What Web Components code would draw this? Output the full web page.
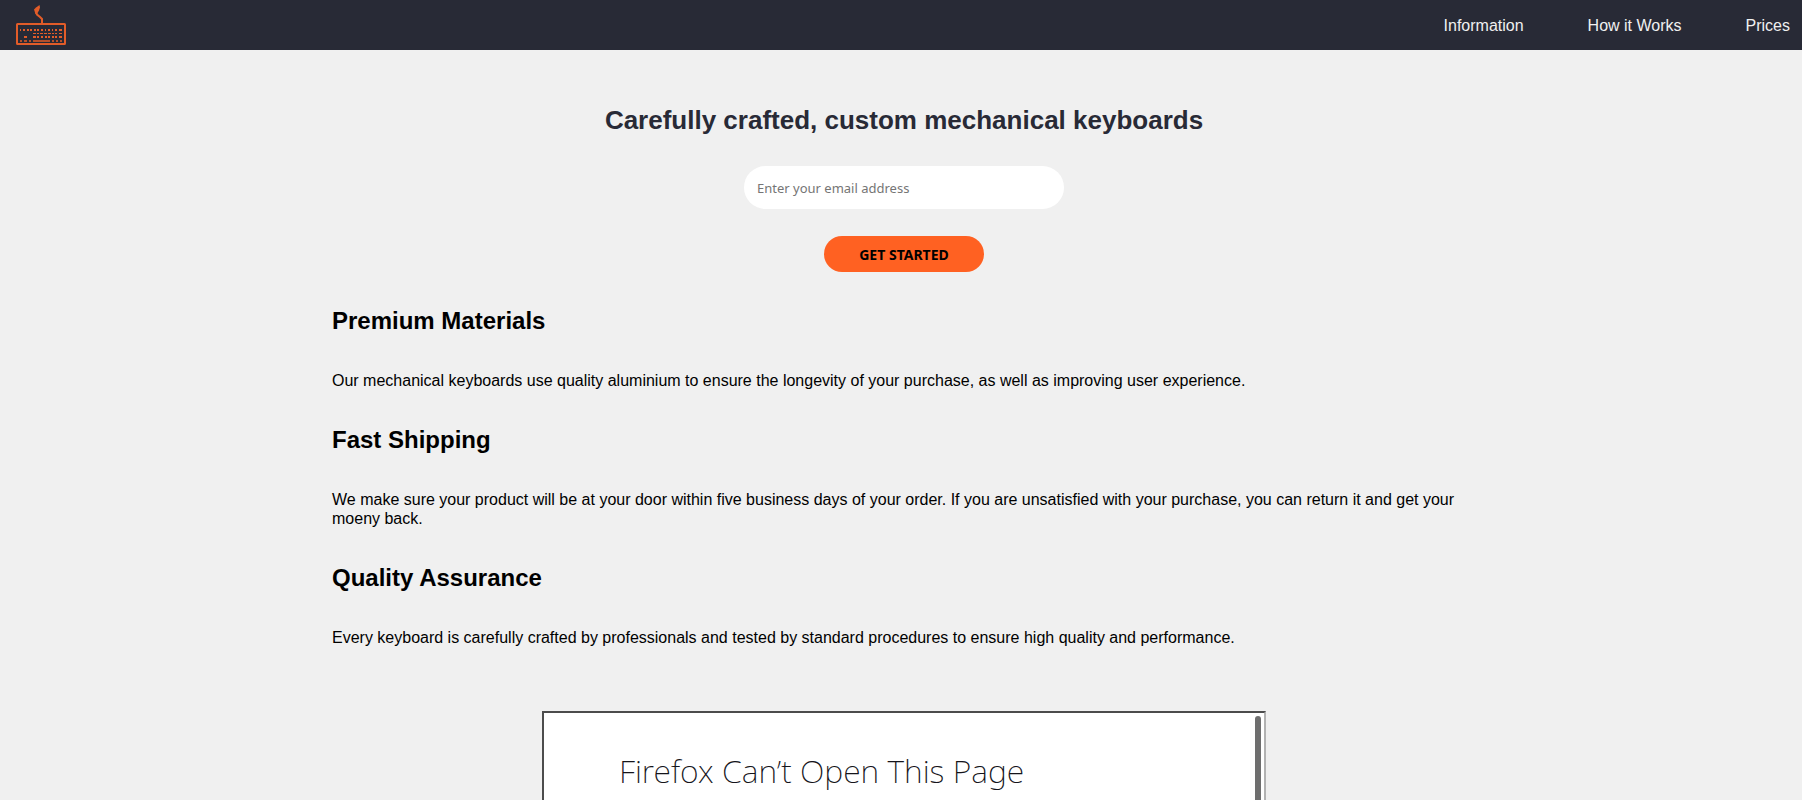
<!DOCTYPE html>
<html lang="en">
<head>
<meta charset="utf-8">
<title>Custom mechanical keyboards</title>
<style>
  html { scrollbar-width: none; }
  body { margin: 0; background: #f0f0f0; color: #000; font: 16px/19px "Liberation Sans", Arial, sans-serif; }
</style>
</head>
<body>
<keyboard-page></keyboard-page>
<script>
const define = (name, html) => {
  const template = document.createElement('template');
  template.innerHTML = html;
  customElements.define(name, class extends HTMLElement {
    constructor() {
      super();
      this.attachShadow({ mode: 'open' }).append(template.content.cloneNode(true));
    }
  });
};

define('keyboard-logo', `
  <style>
    :host { display: block; }
    svg { display: block; width: 52px; height: 42px; }
  </style>
  <svg viewBox="15 4 52 42" fill="none" stroke="#e25c29" role="img" aria-label="Keyboard logo">
    <rect x="17" y="24" width="48" height="20" rx="0.5" stroke-width="2"/>
    <path d="M42 23V19L40 17L37 14.500L36 12.500V9.500" stroke-width="2"/>
    <path d="M39.500 5L36 7.500L34 9.500L35.500 14H37L39 10.500L40 7.500Z" fill="#e25c29" stroke="none"/>
    <path stroke-width="2" d="M20 30h1M23 30h2M27 30h2M30 30h2M34 30h2M37 30h2M41 30h2M45 30h1M48 30h2M52 30h1M55 30h2M59 30h3"/>
    <path stroke-width="1.200" d="M33 33.500h3M37 33.500h2M40 33.500h3M44 33.500h3M48 33.500h3M52 33.500h2M55 33.500h2M59 33.500h3"/>
    <path stroke-width="2" d="M24 37h3M33 37h3M37 37h2M41 37h2M45 37h2M48 37h2M52 37h2M55 37h2M59 37h3"/>
    <path stroke-width="1.600" d="M20 41h2M24 41h3M29 41h2M33 41h17M52 41h2M56 41h2M60 41h2"/>
  </svg>`);

define('site-header', `
  <style>
    :host { display: block; background: #282a36; }
    header { display: flex; align-items: center; justify-content: space-between; height: 50px; padding: 0 12px 0 15px; }
    nav { display: flex; gap: 64px; }
  </style>
  <header><keyboard-logo></keyboard-logo><nav aria-label="Main"><slot></slot></nav></header>`);

define('nav-link', `
  <style>
    :host { display: block; }
    a { color: #f0f0f0; text-decoration: none; }
  </style>
  <a href="#"><slot></slot></a>`);

define('signup-form', `
  <style>
    :host { display: block; }
    form { display: flex; flex-direction: column; align-items: center; }
    h1 { margin: 0 0 30px; font-size: 26px; line-height: 32px; color: #282a36; text-align: center; }
    input, button { border: 0; font-family: "Noto Sans", sans-serif; }
    input { box-sizing: border-box; width: 320px; max-width: 100%; height: 43px; padding: 0 13px; border-radius: 22px; background: #fff; color: #000; font-size: 13px; }
    input::placeholder { color: #757575; opacity: 1; }
    button { width: 160px; height: 36px; margin-top: 27px; padding: 0; border-radius: 18px; background: #ff6122; color: #000; font-size: 14px; font-weight: 700; }
  </style>
  <form>
    <h1><slot></slot></h1>
    <input type="email" aria-label="Email address" placeholder="Enter your email address">
    <button type="submit">GET STARTED</button>
  </form>`);

define('feature-block', `
  <style>
    :host { display: block; }
    h2 { margin: 0; font-size: 24px; line-height: 28px; }
    p { margin: 36px 0 0; }
  </style>
  <section><h2><slot name="title"></slot></h2><p><slot></slot></p></section>`);

define('video-frame', `
  <style>
    :host { display: block; box-sizing: border-box; width: 724px; max-width: 100%; height: 409px; border: 2px solid; border-color: #4c4c4c #b2b2b2 #b2b2b2 #4c4c4c; background: #fff; color: #15141a; }
    .view { display: flex; justify-content: space-between; align-items: flex-start; height: 100%; box-sizing: border-box; padding: 3px 3px 3px 75px; }
    h2 { margin: 35px 0 0; font: 200 32px/40px "Noto Sans", sans-serif; }
    .thumb { width: 6px; height: 280px; border-radius: 3px; background: #6e6e6e; }
  </style>
  <div class="view"><h2><slot></slot></h2><div class="thumb"></div></div>`);

define('keyboard-page', `
  <style>
    :host { display: flex; flex-direction: column; height: 100vh; overflow: hidden; }
    site-header { flex: none; }
    main { padding: 54px 20px 20px 26px; }
    .content { max-width: 1144px; margin: 0 auto; }
    .features { display: grid; gap: 36px; margin: 35px 0 64px; }
    video-frame { margin: 0 auto; }
  </style>
  <site-header>
    <nav-link>Information</nav-link>
    <nav-link>How it Works</nav-link>
    <nav-link>Prices</nav-link>
  </site-header>
  <main>
    <div class="content">
      <signup-form>Carefully crafted, custom mechanical keyboards</signup-form>
      <div class="features">
        <feature-block><span slot="title">Premium Materials</span>Our mechanical keyboards use quality aluminium to ensure the longevity of your purchase, as well as improving user experience.</feature-block>
        <feature-block><span slot="title">Fast Shipping</span>We make sure your product will be at your door within five business days of your order. If you are unsatisfied with your purchase, you can return it and get your moeny back.</feature-block>
        <feature-block><span slot="title">Quality Assurance</span>Every keyboard is carefully crafted by professionals and tested by standard procedures to ensure high quality and performance.</feature-block>
      </div>
      <video-frame>Firefox Can’t Open This Page</video-frame>
    </div>
  </main>`);
</script>
</body>
</html>
